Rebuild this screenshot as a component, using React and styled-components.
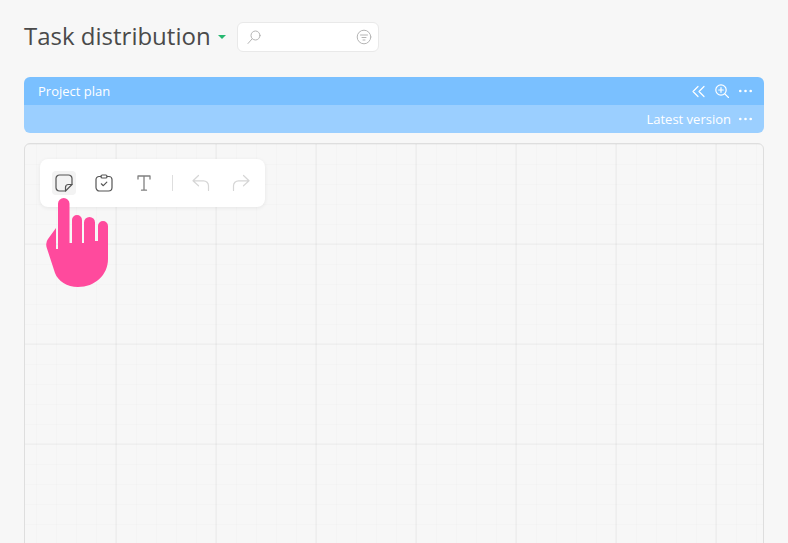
import React from 'react';
import styled, { createGlobalStyle } from 'styled-components';

const Global = createGlobalStyle`
  html, body { margin: 0; padding: 0; height: 100%; background: #f7f7f7; overflow: hidden; }
  body { font-family: "Open Sans", "Noto Sans", sans-serif; }
  * { box-sizing: border-box; }
`;

const Page = styled.div`
  width: 788px;
  height: 543px;
  padding: 22px 24px 0;
  overflow: hidden;
`;
const Header = styled.header`
  display: flex;
  align-items: center;
  height: 30px;
`;
const Title = styled.h1`
  margin: 0 0 3px;
  font-size: 24px;
  font-weight: 400;
  line-height: 27px;
  color: #4a4a4a;
  white-space: nowrap;
`;
const Caret = styled.span`
  width: 0;
  height: 0;
  margin: 0 11px 0 7px;
  border-left: 4px solid transparent;
  border-right: 4px solid transparent;
  border-top: 4px solid #26b870;
`;
const Search = styled.div`
  width: 142px;
  height: 30px;
  display: flex;
  align-items: center;
  justify-content: space-between;
  padding: 0 6px 0 8px;
  background: #fff;
  border: 1px solid #e9e9e9;
  border-radius: 6px;
`;
const Bars = styled.section`
  margin-top: 25px;
  border-radius: 6px;
  overflow: hidden;
  color: #fff;
  font-size: 13px;
`;
const Bar = styled.div`
  height: 28px;
  display: flex;
  align-items: center;
  justify-content: space-between;
  padding: 0 12px 0 14px;
  background: ${p => p.$light ? '#9bcfff' : '#7ac0ff'};
`;
const BarActions = styled.div`
  display: flex;
  align-items: center;
  gap: ${p => p.$gap || 10}px;
  margin-left: auto;
`;
const Canvas = styled.section`
  position: relative;
  margin-top: 10px;
  height: 420px;
  border: 1px solid #dedede;
  border-radius: 6px;
  background-color: #f7f7f7;
  background-image:
    linear-gradient(to right, rgba(0,0,0,0.022) 2px, transparent 2px),
    linear-gradient(to bottom, rgba(0,0,0,0.018) 2px, transparent 2px),
    linear-gradient(to right, rgba(0,0,0,0.01) 1px, transparent 1px),
    linear-gradient(to bottom, rgba(0,0,0,0.01) 1px, transparent 1px);
  background-size: 100px 100px, 100px 100px, 20px 20px, 20px 20px;
  background-position: 90px 0, 0 -1px, 11px 0, 0 0;
`;
const Toolbar = styled.div`
  position: absolute;
  left: 15px;
  top: 15px;
  width: 225px;
  height: 48px;
  display: flex;
  align-items: center;
  padding-left: 12px;
  background: #fff;
  border-radius: 8px;
  box-shadow: 0 1px 4px rgba(0,0,0,0.07);
`;
const Tool = styled.div`
  flex: none;
  width: 24px;
  height: 24px;
  display: flex;
  align-items: center;
  justify-content: center;
  margin-right: 16px;
  border-radius: 4px;
  background: ${p => p.$active ? '#f3f3f3' : 'transparent'};
`;
const Divider = styled.div`
  flex: none;
  width: 1px;
  height: 16px;
  margin: 0 16px 0 0;
  background: #dedede;
`;
const Hand = styled.svg`
  position: absolute;
  left: 20px;
  top: 53px;
`;

const Svg = ({ size = 16, stroke = '#fff', sw = 1.2, children }) => (
  <svg width={size} height={size} viewBox={`0 0 ${size} ${size}`} fill="none" stroke={stroke} strokeWidth={sw} strokeLinecap="round" strokeLinejoin="round">{children}</svg>
);
const Dots = () => (
  <svg width="13" height="14" viewBox="0 0 13 14" fill="#fff"><circle cx="1.3" cy="7" r="1.3"/><circle cx="6.5" cy="7" r="1.3"/><circle cx="11.700" cy="7" r="1.3"/></svg>
);

export default function App() {
  return (
    <Page>
      <Global />
      <Header>
        <Title>Task distribution</Title>
        <Caret />
        <Search>
          <Svg size={16} stroke="#b5b5b5" sw={1}><circle cx="9.500" cy="6.500" r="4.500"/><path d="M6 10 L2 14.500"/></Svg>
          <Svg size={16} stroke="#b5b5b5" sw={1}><circle cx="8" cy="8" r="6.800"/><path d="M4.500 6h7M6 8.500h4M7 11h2"/></Svg>
        </Search>
      </Header>
      <Bars>
        <Bar>
          <span>Project plan</span>
          <BarActions>
            <Svg size={13}><path d="M6 1.500 L1 6.500 L6 11.500M12 1.500 L7 6.500 L12 11.500"/></Svg>
            <Svg size={14}><circle cx="6" cy="6" r="5.200"/><path d="M9.800 9.800l3.700 3.700M6 3.700v4.600M3.700 6h4.600"/></Svg>
            <Dots />
          </BarActions>
        </Bar>
        <Bar $light>
          <BarActions $gap={8}>
            <span>Latest version</span>
            <Dots />
          </BarActions>
        </Bar>
      </Bars>
      <Canvas>
        <Toolbar>
          <Tool $active>
            <Svg size={18} stroke="#555" sw={1.200}><path d="M4.500 1h9a3.500 3.500 0 0 1 3.500 3.500V10.500L10.500 17H4.500A3.500 3.500 0 0 1 1 13.500V4.500A3.500 3.500 0 0 1 4.500 1Z"/><path d="M17 10.500h-3.500a3 3 0 0 0-3 3V17"/></Svg>
          </Tool>
          <Tool>
            <Svg size={18} stroke="#555" sw={1.200}><path d="M6 2.500H4a3 3 0 0 0-3 3v8a3.500 3.500 0 0 0 3.500 3.500h9a3.500 3.500 0 0 0 3.500-3.500v-8a3 3 0 0 0-3-3H12"/><rect x="6" y="1" width="6" height="3" rx="1.300"/><path d="M6.300 9.800l2 1.900 3.500-3.500"/></Svg>
          </Tool>
          <Tool>
            <Svg size={18} stroke="#808080" sw={1.300}><path d="M3 5V2h12v3M9 2v14M6.500 16.200h5"/></Svg>
          </Tool>
          <Divider />
          <Tool>
            <Svg size={18} stroke="#d6d6d6" sw={1.200}><path d="M6.500 1.500L1 6.800l5.500 5M1 6.800h10.500a5 5 0 0 1 5 5v4.700"/></Svg>
          </Tool>
          <Tool>
            <Svg size={18} stroke="#d6d6d6" sw={1.200}><path d="M11.500 1.500L17 6.800l-5.500 5M17 6.800H6.500a5 5 0 0 0-5 5v4.700"/></Svg>
          </Tool>
        </Toolbar>
        <Hand width="66" height="92" viewBox="0 0 66 92" fill="#ff4a9d">
          <path d="M13 52V6.750a5.750 5.750 0 0 1 11.500 0V46H27V23a5 5 0 0 1 10 0V46H39V25.500a5.500 5.500 0 0 1 11 0V44H53V29a5 5 0 0 1 10 0V62C63 78 50 90 33 90C22 90 13 84 10 76L1.500 50Q.5 45 3 42L11 31V52Z"/>
        </Hand>
      </Canvas>
    </Page>
  );
}
